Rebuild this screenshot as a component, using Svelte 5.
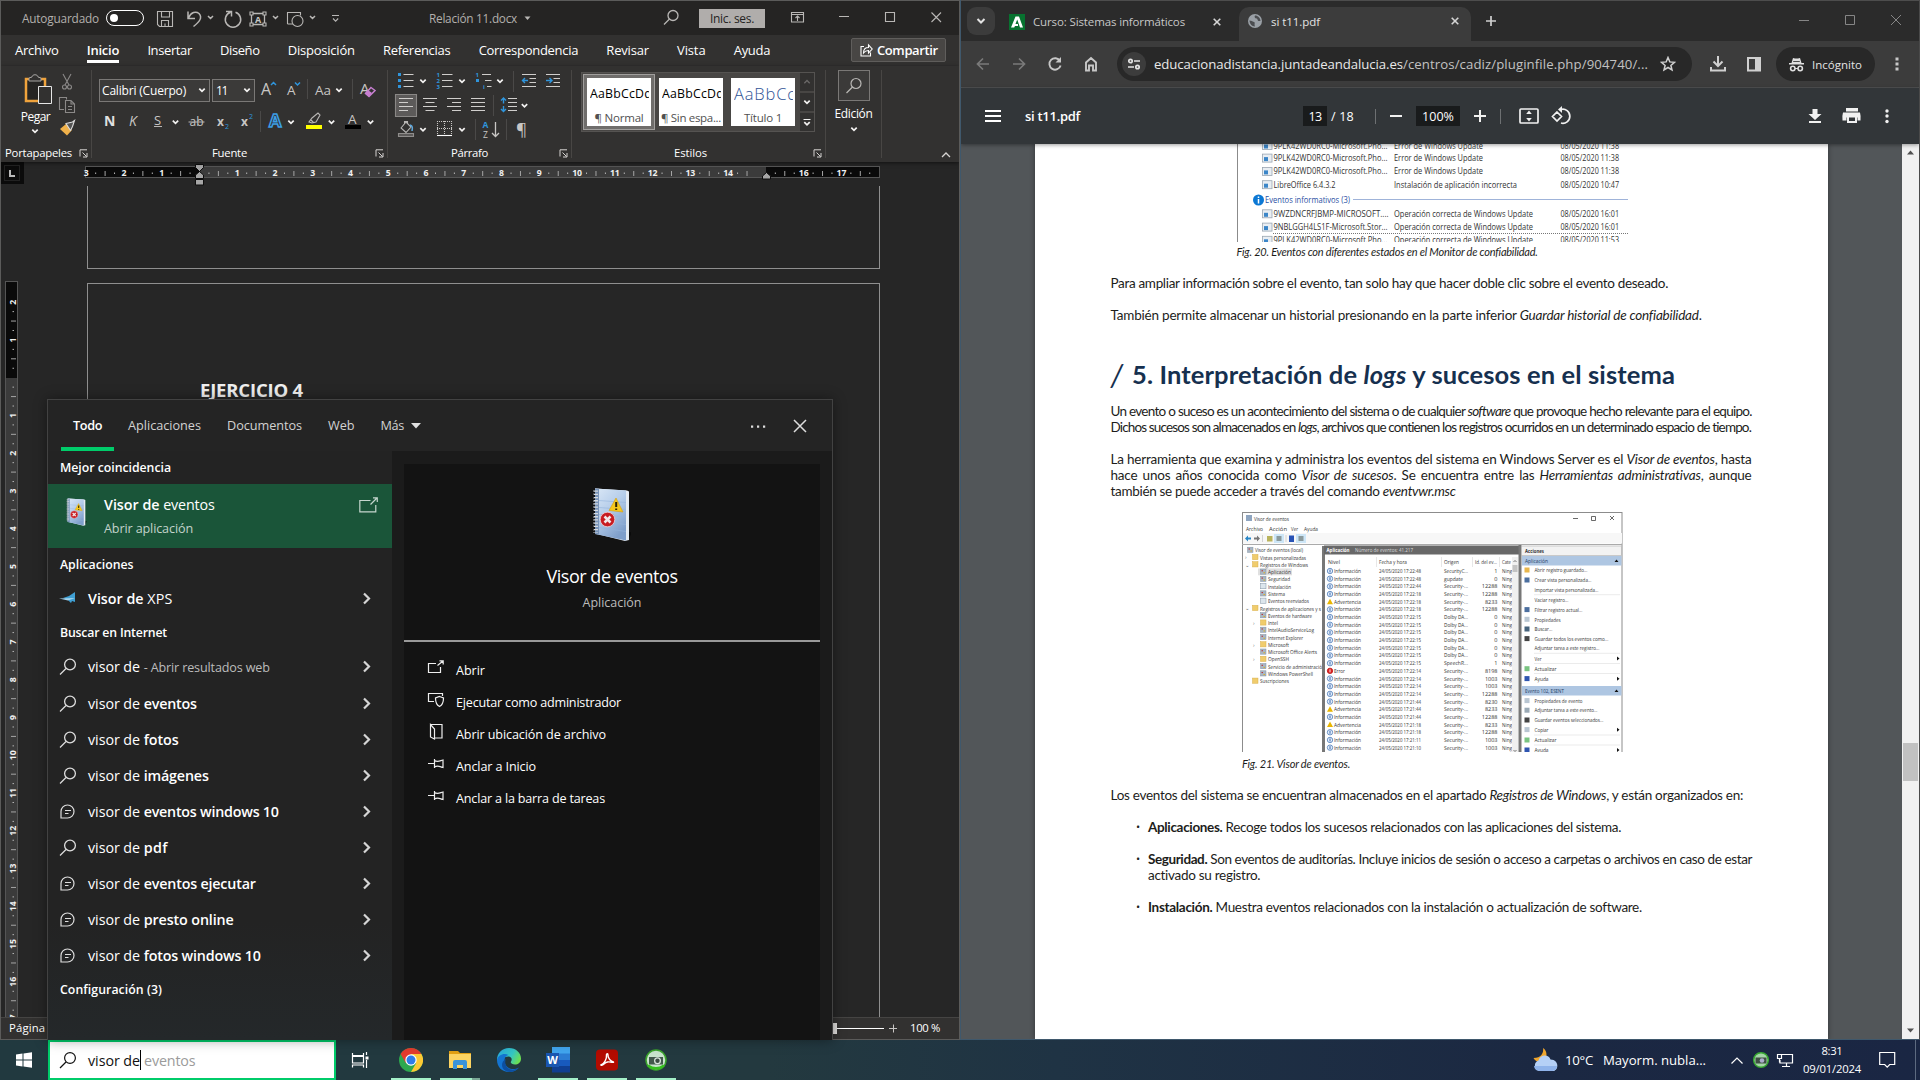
<script>
  // Spreads a run of text over its design width by adjusting tracking (or word gaps).
  function fit(node, arg) {
    const { w, by } = typeof arg === 'object' ? arg : { w: arg, by: 'letter' };
    if (!w) return;
    const now = node.getBoundingClientRect().width;
    const text = node.textContent.trim();
    if (by === 'word') {
      node.style.wordSpacing = (w - now) / (text.split(' ').length - 1) + 'px';
    } else {
      node.style.letterSpacing = (w - now) / text.length + 'px';
    }
  }

  const tabs = [['Archivo', 43.5], ['Inicio', 32.5], ['Insertar', 44.5], ['Diseño', 39.5], ['Disposición', 67], ['Referencias', 67.5], ['Correspondencia', 99.5], ['Revisar', 42.5], ['Vista', 28.5], ['Ayuda', 36.5]];

  const unit = 37.76;
  const hMarks = Array.from({ length: 21 }, (_, i) => i - 3);
  const vMarks = Array.from({ length: 20 }, (_, i) => i - 2);

  const filters = [['Todo', 29], ['Aplicaciones', 73], ['Documentos', 75], ['Web', 26.5], ['Más', 23.5]];
  const hits = [
    ['eventos', 53, 's'], ['fotos', 35, 's'], ['imágenes', 65, 's'], ['eventos windows 10', 135, 'c'], ['pdf', 24, 's'],
    ['eventos ejecutar', 112, 'c'], ['presto online', 90, 'c'], ['fotos windows 10', 117, 'c']
  ];
  const actions = [['open', 'Abrir', 29], ['shield', 'Ejecutar como administrador', 165], ['folder', 'Abrir ubicación de archivo', 150], ['pin', 'Anclar a Inicio', 80], ['pin', 'Anclar a la barra de tareas', 149]];

  const updates = [
    [145, '9PLK42WD0RC0-Microsoft.Pho...', 114, 'Error de Windows Update', 89, '08/05/2020 11:38'],
    [157.6, '9PLK42WD0RC0-Microsoft.Pho...', 114, 'Error de Windows Update', 89, '08/05/2020 11:38'],
    [170.9, '9PLK42WD0RC0-Microsoft.Pho...', 114, 'Error de Windows Update', 89, '08/05/2020 11:38'],
    [184.2, 'LibreOffice 6.4.3.2', 62, 'Instalación de aplicación incorrecta', 123, '08/05/2020 10:47'],
    [213.3, '9WZDNCRFJBMP-MICROSOFT....', 115, 'Operación correcta de Windows Update', 139, '08/05/2020 16:01'],
    [226.6, '9NBLGGH4LS1F-Microsoft.Stor...', 114, 'Operación correcta de Windows Update', 139, '08/05/2020 16:01'],
    [239.8, '9PLK42WD0RC0-Microsoft.Pho...', 114, 'Operación correcta de Windows Update', 139, '08/05/2020 11:53']
  ];

  const tree = [
    [1255, 'Visor de eventos (local)', 48, 'l', ''], [1260, 'Vistas personalizadas', 46, 'f', '›'], [1260, 'Registros de Windows', 48, 'f', '⌄'],
    [1268, 'Aplicación', 23, 'l', ''], [1268, 'Seguridad', 22, 'l', ''], [1268, 'Instalación', 23, 'p', ''], [1268, 'Sistema', 17, 'l', ''], [1268, 'Eventos reenviados', 41, 'p', ''],
    [1260, 'Registros de aplicaciones y s', 61, 'f', '⌄'], [1268, 'Eventos de hardware', 44, 'l', ''], [1268, 'Intel', 10, 'f', '›'], [1268, 'IntelAudioServiceLog', 46, 'l', ''],
    [1268, 'Internet Explorer', 35, 'l', ''], [1268, 'Microsoft', 21, 'f', '›'], [1268, 'Microsoft Office Alerts', 49, 'l', ''], [1268, 'OpenSSH', 21, 'f', '›'],
    [1268, 'Servicio de administració', 54, 'l', ''], [1268, 'Windows PowerShell', 45, 'l', ''], [1260, 'Suscripciones', 29, 'f', '']
  ];
  const events = [
    ['i', '22:48', 'SecurityC...', '1'], ['i', '22:48', 'gupdate', '0'], ['i', '22:44', 'Security-...', '12288'], ['i', '22:18', 'Security-...', '12288'],
    ['w', '22:18', 'Security-...', '8233'], ['i', '22:18', 'Security-...', '12288'], ['i', '22:15', 'Dolby DA...', '0'], ['i', '22:15', 'Dolby DA...', '0'],
    ['i', '22:15', 'Dolby DA...', '0'], ['i', '22:15', 'Dolby DA...', '0'], ['i', '22:15', 'Dolby DA...', '0'], ['i', '22:15', 'Dolby DA...', '0'],
    ['i', '22:15', 'SpeechR...', '1'], ['e', '22:14', 'Security-...', '8198'], ['i', '22:14', 'Security-...', '1003'], ['i', '22:14', 'Security-...', '1003'],
    ['i', '22:14', 'Security-...', '12288'], ['i', '21:44', 'Security-...', '8230'], ['w', '21:44', 'Security-...', '8233'], ['i', '21:44', 'Security-...', '12288'],
    ['w', '21:18', 'Security-...', '8233'], ['i', '21:18', 'Security-...', '12288'], ['i', '21:11', 'Security-...', '1003'], ['i', '21:10', 'Security-...', '1003']
  ];
  const kinds = { i: ['Información', 27], w: ['Advertencia', 27], e: ['Error', 11] };
  const side = [
    [570, 'Abrir registro guardado...', 53, '#e8b64c'], [580, 'Crear vista personalizada...', 57, '#4c6f9f'], [589.7, 'Importar vista personalizada...', 64, ''], [600, 'Vaciar registro...', 34, ''],
    [609.6, 'Filtrar registro actual...', 48, '#4c6f9f'], [619.3, 'Propiedades', 26, '#b9c6d2'], [629, 'Buscar...', 18, '#46637c'], [638.6, 'Guardar todos los eventos como...', 74, '#444'],
    [648, 'Adjuntar tarea a este registro...', 65, ''], [658.3, 'Ver', 7, ''], [668.7, 'Actualizar', 22, '#79c481'], [678.6, 'Ayuda', 14, '#2e55b0'],
    [700.6, 'Propiedades de evento', 48, '#b9c6d2'], [710.2, 'Adjuntar tarea a este evento...', 63, '#9aa9b5'], [720, 'Guardar eventos seleccionados...', 69, '#444'],
    [729.6, 'Copiar', 14, '#b9c6d2'], [740, 'Actualizar', 22, '#79c481'], [750, 'Ayuda', 14, '#2e55b0']
  ];
</script>

{#snippet t(s, w, cls = '')}<span class="t {cls}" use:fit={w}>{s}</span>{/snippet}

{#snippet v(x, y, s, w, cls = '')}<text {x} {y} textLength={w} lengthAdjust="spacingAndGlyphs" class="v {cls}">{s}</text>{/snippet}

{#snippet chev(x, y)}<path class="wl" stroke-width="1.7" d="M{x - 2.7} {y - 1.3}l2.7 2.7 2.7-2.7" />{/snippet}

{#snippet lens()}
  <svg class="ri" width="18" height="18" viewBox="0 0 18 18"><circle cx="11" cy="6.500" r="5.400" /><path d="M7 10.500l-6 6" /></svg>
{/snippet}

{#snippet arrow()}
  <svg class="go" width="10" height="14" viewBox="0 0 10 14"><path d="M2 1.500l5 5-5 5" /></svg>
{/snippet}

{#snippet openIcon(w)}
  <svg width={w} height={w * 0.84} viewBox="0 0 19 16" fill="none" stroke="currentColor" stroke-width="1.2"><path d="M11.5 3.5H.8v11.5h16V8" /><path d="M11.5 7.5L18 1M14 .8h4.3V5" /></svg>
{/snippet}

{#snippet launcher()}
  <svg class="launch" width="9" height="9" viewBox="0 0 9 9"><path d="M1 7.500V.8h7M3.500 3.500l4 4M8 4v4H4" /></svg>
{/snippet}

{#snippet notebook(w, h)}
  <svg width={w} height={h} viewBox="0 0 40 54">
    <defs>
      <linearGradient id="cover{w}" x1="0" y1="0" x2="0.6" y2="1"><stop offset="0" stop-color="#dbe8f6" /><stop offset="0.5" stop-color="#b5cdea" /><stop offset="1" stop-color="#7f9fcb" /></linearGradient>
    </defs>
    <path d="M36 44l5 1-4 8z" fill="#050505" opacity=".6" />
    <path d="M4 1L36 3 38 4V52.500L34 53.500 4 46z" fill="#e6ecf3" />
    <path d="M4 1L35 3V53L4 46.500z" fill="url(#cover{w})" />
    <path d="M4 1L8 1.300V47L4 46.500z" fill="#7994b9" />
    <path d="M8 13l27 2M8 20l27 2M8 27l27 2.500M8 34l27 3M8 40l27 4" stroke="#94b4dc" stroke-width=".6" />
    <path d="M4.500 3V45" stroke="#d5d9de" stroke-width="5" stroke-dasharray="1.300 1.900" />
    <path d="M2.500 3V45" stroke="#50555e" stroke-width="1" stroke-dasharray="1.300 1.900" />
    <path d="M25 10.500L32 24.500 18 23z" fill="#f6c81b" stroke="#d59c12" stroke-width=".6" />
    <path d="M25.200 14.500V19.500M25.200 21v1.600" stroke="#2b2204" stroke-width="2" />
    <circle cx="16.500" cy="32" r="7.300" fill="#c81c22" stroke="#eed3d6" stroke-width=".8" />
    <path d="M13.500 29l6 6M19.500 29l-6 6" stroke="#f1e8e9" stroke-width="2.500" />
  </svg>
{/snippet}

<div class="desktop">
  <section class="word">
    <header class="wtitle">
      {@render t('Autoguardado', 77, 'auto')}
      <span class="toggle"><i></i></span>
      <svg width="285" height="34" viewBox="144 1 285 34" class="wi">
        <path d="M157.500 11.500h15v15h-13l-2-2zM161.500 11.500v5.500h8v-5.500M161.500 26.500v-6h7v6M165 26v-2.500" />
        <path stroke-width="1.500" d="M188 11.500V18.500H195M188.500 18C191 12 196 11 199 13.500C203 18 199 22 193.500 26.500" />
        <path stroke-width="1.500" d="M226 11.500H231.500V16.500M230.500 12.200a7.700 7.700 0 1 0 5 0" />
        <path stroke-width="1.300" d="M251.500 13.500h13v11h-13z" /><path fill="#252423" d="M250 12h3v3h-3zM263 12h3v3h-3zM250 23h3v3h-3zM263 23h3v3h-3z" />
        <path d="M287.500 24V12.500h13v3M293 24h-5.500" /><circle cx="297.500" cy="21" r="5.500" />
        <path stroke-width="1.500" d="M208 16l2.500 2.500 2.500-2.500M273 16l2.500 2.500 2.500-2.500M310 16l2.500 2.500 2.500-2.500" />
        <path d="M332 15.500h7M333 18.500l2.600 2.600 2.600-2.600" />
        <text x="255" y="22.500" class="st ib">A</text>
      </svg>
      {@render t('Relación 11.docx', 88, 'docname')}
      <svg width="182" height="34" viewBox="517 1 182 34" class="wi">
        <path d="M524.500 16.500h6l-3 3.500z" fill="#b9b7b5" stroke="none" /><circle cx="673" cy="15.500" r="5" stroke-width="1.300" /><path stroke-width="1.300" d="M669.500 19L664 24.500" />
      </svg>
      <button class="signin">{@render t('Inic. ses.', 44)}</button>
      <svg width="193" height="34" viewBox="765 1 193 34" class="wi">
        <path d="M791.500 12.500h12v9.500h-12zM791.500 14.500h12M797.500 21v-5M795.500 18l2-2 2 2M839 16.500h10M885.500 12.500h9v9h-9zM931.500 12.500l9.500 9.500M941 12.500l-9.500 9.500" />
      </svg>
    </header>

    <nav class="wtabs">
      {#each tabs as [name, w]}
        <span class="wtab" class:on={name === 'Inicio'}>{@render t(name, w)}</span>
      {/each}
      <button class="share">
        <svg width="13" height="14" viewBox="0 0 13 14"><path d="M4 3.500H1V13h9.500V9.500M3.500 10c0-4 2-5.500 5-5.500V2l3.700 4-3.700 4V7.500C6.500 7.500 5 8 3.500 10z" /></svg>
        {@render t('Compartir', 61)}
      </button>
    </nav>

    <div class="ribbon">
      <div class="group clip">
        <div class="gbody">
          <div class="paste">
            <svg width="35" height="38" viewBox="20 70 35 38">
              <path d="M25 78h19v22H25z" fill="#252423" stroke="#f0a33c" stroke-width="2.500" /><path d="M28 80v-3l3-1c0-3 6-3 6 0l3 1v3z" fill="#323130" stroke="#a5a3a1" />
              <path d="M37.500 85.500h13v17h-13z" fill="#323130" stroke="#e6e6e6" />
            </svg>
            {@render t('Pegar', 29.5)}
            <svg width="10" height="8" viewBox="0 0 10 8">{@render chev(5, 4)}</svg>
          </div>
          <svg width="22" height="66" viewBox="56 70 22 66" class="wi">
            <path stroke="#8b8988" d="M63 73l6 11M71 73l-6 11" /><circle cx="64.500" cy="86" r="2" stroke="#8b8988" /><circle cx="69.500" cy="86" r="2" stroke="#8b8988" />
            <path stroke="#8b8988" d="M64 108.500h-4.500V96.500h7v2M65.500 99.500h5.500l3.500 3.500v8.500h-9zM71 99.500v3.500h3.500M68 105.500h4M68 108.500h4" />
            <path d="M60 128l6-5 6 6-5 5.500z" fill="#f0b14a" stroke="none" /><path d="M66 122.500l6.500-1.500 2-1.500-2 6-2 4z" stroke="#ddd" fill="#555" />
          </svg>
        </div>
        <footer>{@render t('Portapapeles', 67)}{@render launcher()}</footer>
      </div>

      <div class="group font">
        <div class="gbody col">
          <div class="frow">
            <span class="combo name">{@render t('Calibri (Cuerpo)', 84)}<svg width="8" height="6" viewBox="0 0 8 6">{@render chev(4, 3)}</svg></span>
            <span class="combo size">{@render t('11', 11)}<svg width="8" height="6" viewBox="0 0 8 6">{@render chev(4, 3)}</svg></span>
            <svg width="130" height="24" viewBox="255 77 130 24" class="wi">
              <text x="261" y="93.500" class="st a1">A</text><text x="287" y="93.500" class="st a2">A</text><text x="315" y="93.500" class="st a2">Aa</text><text x="360" y="92.500" class="st a3">A</text>
              <path stroke="#2f95dc" stroke-width="1.500" d="M271 84l2.500-2.500 2.500 2.500M295 81.500l2.500 2.500 2.500-2.500" />
              <path stroke="#4a4948" d="M307.500 78v20M352.500 78v20" />
              <path stroke="#c77fd0" stroke-width="1.500" d="M371 86.500l4 3-6 6-3.500-3z" /><path fill="#c77fd0" stroke="none" d="M368 89l4 3-3 3.500-4-3z" />
              {@render chev(339, 89)}
            </svg>
          </div>
          <svg width="288" height="24" viewBox="99 108 288 24" class="wi">
            <text x="104" y="124.500" class="st b1">N</text><text x="129" y="124.500" class="st b2">K</text><text x="154" y="123.500" class="st b3">S</text>
            <text x="189.500" y="125" class="st b4">ab</text><text x="217" y="124.500" class="st b5">x</text><text x="241" y="124.500" class="st b5">x</text>
            <text x="225" y="128" class="st b6">2</text><text x="249" y="117.500" class="st b6">2</text>
            <text x="269" y="126" class="st b7">A</text><text x="348" y="122.500" class="st a2">A</text>
            <path d="M154 125.500h8M188.500 121h16" />
            <path stroke="#4a4948" d="M260.500 110v21" />
            <path d="M312 117l6-5 2 2-4 7-4 1-3-1zM311 119l3 3" /><path d="M306 124h16v4h-16z" fill="#ff0" stroke="none" /><path d="M345 124h16v4h-16z" fill="#000" stroke="none" />
            {@render chev(175.5, 121)}{@render chev(291, 121)}{@render chev(331.5, 121)}{@render chev(370.5, 121)}
          </svg>
        </div>
        <footer>{@render t('Fuente', 35)}{@render launcher()}</footer>
      </div>

      <div class="group para">
        <svg width="183" height="76" viewBox="388 69 183 76" class="wi">
          <path fill="#2f95dc" stroke="none" d="M398 72h3v3h-3zM398 78h3v3h-3zM398 84h3v3h-3zM476 78h3v3h-3z" />
          <path stroke="#d0cecc" d="M403.500 73.500h10M403.500 79.500h10M403.500 85.500h10M442 73.500h10.500M442 79.500h10.500M442 85.500h10.500M482 73.500h9M485 79.500h6.500M487 85.500h4.500" />
          <text x="436.500" y="76" class="st n">1</text><text x="436.500" y="82" class="st n">2</text><text x="436.500" y="88" class="st n">3</text><text x="475.500" y="76" class="st n">1</text><text x="483" y="88" class="st n">i</text>
          <path stroke="#4a4948" d="M513.500 70v21M493.500 94v21M475.500 118v21M506.500 118v21" />
          <path stroke="#d0cecc" d="M522 73.500h14M529.500 77.500h6.500M529.500 81.500h6.500M522 85.500h14M546 73.500h14M553.500 77.500h6.500M553.500 81.500h6.500M546 85.500h14" />
          <path stroke="#2f95dc" stroke-width="1.400" d="M528 79.500h-5.500M525 77l-2.500 2.500 2.500 2.500M546 79.500h5.500M549.500 77l2.500 2.500-2.500 2.500" />
          <path fill="#5c5a59" stroke="#8a8886" d="M395.500 93.500h21v22h-21z" />
          <path stroke="#d0cecc" d="M399 97.500h14M399 101.500h9M399 105.500h14M399 109.500h9M423 97.500h14M425.500 101.500h9M423 105.500h14M425.500 109.500h9M447 97.500h14M452 101.500h9M447 105.500h14M452 109.500h9M471 97.500h14M471 101.500h14M471 105.500h14M471 109.500h14M508 97.500h9M508 101.500h9M508 105.500h9M508 109.500h9" />
          <path stroke="#2f95dc" stroke-width="1.400" d="M503.500 97v5.500M503.500 105v5.500M501 99.500l2.500-2.500 2.500 2.500M501 108l2.500 2.500 2.500-2.500" />
          <path d="M401 127l5-6 5 5-5 5.500zM404.500 123v-2.500h3v2" /><path stroke="#5fa8dd" stroke-width="1.500" d="M410 124c3 1 2.500 3 2 6" /><path stroke="#8f8d8b" fill="#5c5a59" d="M398.500 132.500h15v3h-15z" />
          <path stroke="#c8c6c4" stroke-dasharray="1 1" d="M437.500 120v15M451.500 120v15M444.500 120v15M437 120.500h15M437 127.500h15" /><path stroke="#fff" d="M437 134.500h15" />
          <text x="482.500" y="126.500" class="st az">A</text><text x="483" y="136.500" class="st zz">Z</text><path stroke="#c8c6c4" stroke-width="1.300" d="M495.500 121v14M492 132l3.500 3.500 3.500-3.500" />
          <text x="516" y="133.500" class="st pil">¶</text>
          {@render chev(423, 80)}{@render chev(462, 80)}{@render chev(500, 80)}{@render chev(524.5, 104.500)}{@render chev(423, 128.500)}{@render chev(462, 128.500)}
        </svg>
        <footer>{@render t('Párrafo', 37)}{@render launcher()}</footer>
      </div>

      <div class="group styles">
        <div class="gallery">
          <div class="card sel"><div class="paper"><div class="sample">{@render t('AaBbCcDd', 62)}</div>{@render t('¶ Normal', 49, 'sname')}</div></div>
          <div class="card"><div class="paper"><div class="sample">{@render t('AaBbCcDd', 62)}</div>{@render t('¶ Sin espa...', 60, 'sname')}</div></div>
          <div class="card"><div class="paper"><div class="sample big">{@render t('AaBbCc', 62)}</div>{@render t('Título 1', 38, 'sname')}</div></div>
          <div class="spin">
            <span><svg width="8" height="6" viewBox="0 0 8 6"><path d="M1.300 4.200L4 1.500l2.700 2.700" fill="none" stroke="#6b6968" stroke-width="1.300" /></svg></span>
            <span><svg width="8" height="6" viewBox="0 0 8 6">{@render chev(4, 3)}</svg></span>
            <span><svg width="8" height="10" viewBox="0 0 8 10"><path d="M.5 2.500h7" class="wl" />{@render chev(4, 6.500)}</svg></span>
          </div>
        </div>
        <footer>{@render t('Estilos', 33)}{@render launcher()}</footer>
      </div>

      <div class="group edit">
        <span class="find"><svg width="18" height="18" viewBox="0 0 18 18" class="wi"><circle cx="11" cy="6.500" r="5" stroke-width="1.200" /><path stroke-width="1.200" d="M7.500 10L1.500 16" /></svg></span>
        {@render t('Edición', 38)}
        <svg width="10" height="8" viewBox="0 0 10 8">{@render chev(5, 4)}</svg>
      </div>
      <svg class="collapse" width="10" height="8" viewBox="0 0 10 8"><path d="M1 6l4-4 4 4" fill="none" stroke="#d6d4d2" stroke-width="1.300" /></svg>
    </div>

    <svg class="hruler" width="958" height="24" viewBox="1 162 958 24">
      <rect x="0" y="162" width="24" height="22" fill="#0b0b0b" /><rect x="4.500" y="165.500" width="15" height="15" fill="none" stroke="#222" />
      <path d="M10 170v6h5" fill="none" stroke="#b9b9b9" stroke-width="2" />
      <rect x="85.500" y="166.500" width="794" height="11" fill="#3b3b3b" stroke="#555" />
      <rect x="86" y="167" width="114" height="10" fill="#0a0a0a" /><rect x="766" y="167" width="113" height="10" fill="#0a0a0a" />
      {#each hMarks as n}
        {#if n !== 0 && n !== 15 && n < 18}<text x={199.5 + n * unit} y="176" class="rn">{Math.abs(n)}</text>{/if}
        <path d="M{199.5 + (n + 0.5) * unit} 171v5" stroke="#a5a5a5" />
        {#if n !== 14}<path d="M{199.5 + (n + 0.75) * unit} 172.500v1.500" stroke="#b5b5b5" />{/if}
        <path d="M{199.5 + (n + 0.25) * unit} 172.500v1.500" stroke="#b5b5b5" />
      {/each}
      <path d="M880 162h80v24h-80z" fill="#262626" />
      <path d="M195.500 164.500h8v3l-4 4 4 3.500v3.500h-8v-3.500l4-3.500-4-4zM195.500 179.500h8v5.500h-8z" fill="#a6a6a6" stroke="#0d0d0d" />
      <path d="M766.500 172.500l4 3.500v3h-8v-3z" fill="#a6a6a6" stroke="#0d0d0d" />
    </svg>

    <div class="doc">
      <svg class="vruler" width="20" height="831" viewBox="1 186 20 831">
        <rect x="5.500" y="281.500" width="12" height="760" fill="#3b3b3b" stroke="#555" /><rect x="6" y="282" width="11" height="96" fill="#0a0a0a" />
        {#each vMarks as n}
          {#if n !== 0}<text transform="translate(16 {377.7 + n * unit}) rotate(-90)" class="rn">{Math.abs(n)}</text>{/if}
          <path d="M11 {377.7 + (n + 0.5) * unit}h5" stroke="#a5a5a5" />
          <path d="M12.500 {377.7 + (n + 0.75) * unit}h1.500M12.500 {377.7 + (n + 0.25) * unit}h1.500" stroke="#b5b5b5" />
        {/each}
      </svg>
      <div class="pages">
        <div class="sheet first"></div>
        <div class="sheet second">{@render t('EJERCICIO 4', 103, 'exercise')}</div>
      </div>
    </div>

    <footer class="wstatus">
      {@render t('Página 4', 46)}
      <div class="zoom">
        <svg width="70" height="16" viewBox="832 1020 70 16"><path d="M832 1028.500h52" stroke="#fff" /><path d="M832 1023h5v11h-5z" fill="#e1dfdd" /><path d="M889 1028.500h8M893.500 1024.500v8" stroke="#c8c6c4" /></svg>
        {@render t('100 %', 30)}
      </div>
    </footer>
  </section>

  <section class="chrome">
    <header class="strip">
      <button class="tabsearch"><svg width="10" height="8" viewBox="0 0 10 8"><path d="M1.500 2L5 5.500 8.500 2" fill="none" stroke="#e3e3e3" stroke-width="2" /></svg></button>
      <div class="tab idle">
        <svg width="16" height="16" viewBox="0 0 16 16"><path d="M0 0h16v16H0z" fill="#07722f" /><path d="M2 13.500L6.500 2.500h3.500L14 13.500h-3L8.200 5.500 6.500 10H9v2H6l-.8 1.500z" fill="#fff" /></svg>
        {@render t('Curso: Sistemas informáticos', 152)}
        <svg class="x" width="8" height="8" viewBox="0 0 8 8"><path d="M.7.7l6.600 6.600M7.300.7L.7 7.300" /></svg>
      </div>
      <div class="tab live">
        <svg width="14" height="14" viewBox="0 0 14 14"><circle cx="7" cy="7" r="7" fill="#9aa0a6" /><path d="M1.500 6.500c2 0 2.500 1 4.500 1.500 1.500.5 0 2 1 4.500-3 0-5.500-3-5.500-6zM7 1.500c-1 1.500 0 3 1.500 3S9 7 11 7l1.500 0C12.500 4 10 1.500 7 1.500z" fill="#4b4d50" /></svg>
        {@render t('si t11.pdf', 49)}
        <svg class="x" width="8" height="8" viewBox="0 0 8 8"><path d="M.7.7l6.600 6.600M7.300.7L.7 7.300" /></svg>
      </div>
      <svg class="plus" width="10" height="10" viewBox="0 0 10 10"><path d="M5 0v10M0 5h10" stroke="#d0d0d0" stroke-width="1.700" /></svg>
      <svg class="caps" width="104" height="12" viewBox="1798 14 104 12"><path d="M1799 20.500h10M1845.500 15.500h9v9h-9zM1891 15l10 10M1901 15l-10 10" fill="none" stroke="#868686" /></svg>
    </header>

    <div class="bar">
      <svg width="156" height="46" viewBox="961 41 156 46" fill="none" stroke="#c7c7c7" stroke-width="1.900">
        <path stroke="#7a7a7a" stroke-width="1.700" d="M989 64h-11M983 58.500L977.500 64l5.500 5.500M1013 64h11M1019 58.500l5.500 5.500-5.500 5.500" />
        <path d="M1060 61a5.700 5.700 0 1 0 .6 4.500" /><path d="M1061 57v5.500h-5.500z" fill="#c7c7c7" stroke="none" />
        <path d="M1086 62.500l5-4.500 5 4.500v8h-3v-5h-4v5h-3z" />
      </svg>
      <div class="omni">
        <span class="site"><svg width="14" height="12" viewBox="0 0 14 12" fill="none" stroke="#e3e3e3" stroke-width="1.700"><circle cx="3.500" cy="3" r="1.700" /><path d="M7 3h6M1 9h6" /><circle cx="10.500" cy="9" r="1.700" /></svg></span>
        {@render t('educacionadistancia.juntadeandalucia.es', 249, 'host')}{@render t('/centros/cadiz/pluginfile.php/904740/...', 245, 'path')}
        <svg class="star" width="16" height="16" viewBox="0 0 16 16"><path d="M8 1.500l1.800 4.400 4.700.4-3.600 3.100 1.100 4.600L8 11.500 4 14l1.100-4.600L1.500 6.300l4.700-.4z" fill="none" stroke="#d0d0d0" stroke-width="1.500" /></svg>
      </div>
      <svg width="84" height="46" viewBox="1692 41 84 46" fill="none" stroke="#d0d0d0" stroke-width="2">
        <path d="M1718 56v9M1713.500 61.500l4.500 4.500 4.500-4.500M1711 67v3.500h14V67" /><path d="M1748 58h12v12.500h-12z" /><path d="M1755 57h6v14h-6z" fill="#d0d0d0" stroke="none" />
      </svg>
      <span class="incog">
        <svg width="15" height="15" viewBox="0 0 15 15" fill="#e0e0e0"><path d="M4 1l2 .5L9 1.500 11 1l1.500 5H15v1.500H0V6h2.500z" /><path d="M4.200 4.500h6.600" stroke="#282828" stroke-width=".8" /><circle cx="3.800" cy="11.500" r="2.200" fill="none" stroke="#e0e0e0" stroke-width="1.600" /><circle cx="11.200" cy="11.500" r="2.200" fill="none" stroke="#e0e0e0" stroke-width="1.600" /><path d="M6 11h3v1H6z" /></svg>
        {@render t('Incógnito', 50)}
      </span>
      <svg class="more" width="4" height="16" viewBox="0 0 4 16" fill="#c7c7c7"><path d="M.5 1.500h3v3h-3zM.5 6.500h3v3h-3zM.5 11.500h3v3h-3z" /></svg>
    </div>

    <div class="pdfbar">
      <svg class="burger" width="16" height="12" viewBox="0 0 16 12"><path d="M0 1h16M0 6h16M0 11h16" stroke="#fff" stroke-width="2" /></svg>
      {@render t('si t11.pdf', 55, 'fname')}
      <div class="pager"><b>{@render t('13', 13)}</b>{@render t('/ 18', 23)}</div>
      <svg width="41" height="24" viewBox="1375 104 41 24"><path d="M1375.500 109v15" stroke="#6d7072" /><path d="M1390 116h12" stroke="#f1f1f1" stroke-width="2" /></svg>
      <b class="pct">{@render t('100%', 32)}</b>
      <svg width="120" height="24" viewBox="1460 104 120 24" fill="none" stroke="#f1f1f1" stroke-width="2">
        <path d="M1480 110v12M1474 116h12" /><path stroke="#6d7072" stroke-width="1" d="M1500.500 109v15" />
        <rect x="1520" y="109" width="18" height="14" rx="1" stroke-width="1.700" /><path d="M1529 110.500l2.800 3.500h-5.600zM1529 121.500l2.800-3.500h-5.600z" fill="#f1f1f1" stroke="none" />
        <path stroke-width="1.700" d="M1557 112l4.500 4.500-4.500 4.500-4.500-4.500zM1561 109.500a7 7 0 1 1 0 13.500" /><path d="M1562 106v7l-4-3.500z" fill="#f1f1f1" stroke="none" />
      </svg>
      <svg class="right" width="84" height="24" viewBox="1808 104 84 24" fill="#f1f1f1">
        <path d="M1812.500 109h5v5h4l-6.500 6-6.500-6h4zM1809 121h12v2h-12zM1846 108h12v3.500h-12zM1843 112.500h17q1 3.500.5 8h-3v-3h-11v3h-4q-.5-5 .5-8zM1847 117.500h10v5.500h-10z" /><path d="M1849 117.500h6v3.500h-6z" fill="#323639" />
        <circle cx="1887" cy="111" r="1.700" /><circle cx="1887" cy="116" r="1.700" /><circle cx="1887" cy="121.500" r="1.700" />
      </svg>
    </div>

    <div class="viewer">
      <article class="page">
        <svg class="fig20" width="392" height="98" viewBox="1237 144 392 98">
          <path d="M1237.500 144v98" stroke="#8b8b8b" />
          {#each updates as [y, a, aw, b, bw, c]}
            <rect x="1262.500" y={y - 3.500} width="9.500" height="8" fill="#e9eef3" stroke="#9aa6b2" stroke-width=".8" /><rect x="1264" y={y - 0.500} width="4" height="4" fill="#3c86c8" />
            <text x="1273.500" y={y + 3.500} textLength={aw} lengthAdjust="spacingAndGlyphs" class="u">{a}</text>
            <text x="1394" y={y + 3.500} textLength={bw} lengthAdjust="spacingAndGlyphs" class="u">{b}</text>
            <text x="1560.500" y={y + 3.500} textLength="58.500" lengthAdjust="spacingAndGlyphs" class="u">{c}</text>
          {/each}
          <circle cx="1258.500" cy="200" r="5.500" fill="#0c78d4" /><path d="M1258.500 196.500v1.500M1258.500 199v4.500" stroke="#fff" stroke-width="1.500" />
          <text x="1265" y="203" textLength="85" lengthAdjust="spacingAndGlyphs" class="u blue">Eventos informativos (3)</text><path d="M1353 199.500h275" stroke="#9fb3d9" />
          <path d="M1273 233.500h355" stroke="#777" stroke-dasharray="1 1" />
        </svg>
        <div class="cap c20"><em class="t" use:fit={301}>Fig. 20. Eventos con diferentes estados en el Monitor de confiabilidad.</em></div>
        <p class="m15"><span class="t" use:fit={557.5}>Para ampliar información sobre el evento, tan solo hay que hacer doble clic sobre el evento deseado.</span></p>
        <p class="m16"><span class="t" use:fit={591}>También permite almacenar un historial presionando en la parte inferior <em>Guardar historial de confiabilidad</em>.</span></p>
        <h1><i class="slash">/</i><span class="t" use:fit={543}>5. Interpretación de <em>logs</em> y sucesos en el sistema</span></h1>
        <p><span class="t" use:fit={641}>Un evento o suceso es un acontecimiento del sistema o de cualquier <em>software</em> que provoque hecho relevante para el equipo.</span></p>
        <p><span class="t" use:fit={641}>Dichos sucesos son almacenados en <em>logs</em>, archivos que contienen los registros ocurridos en un determinado espacio de tiempo.</span></p>
        <p class="m16"><span class="t snug" use:fit={{ w: 641, by: 'word' }}>La herramienta que examina y administra los eventos del sistema en Windows Server es el <em>Visor de eventos</em>, hasta</span></p>
        <p><span class="t snug" use:fit={{ w: 641, by: 'word' }}>hace unos años conocida como <em>Visor de sucesos</em>. Se encuentra entre las <em>Herramientas administrativas</em>, aunque</span></p>
        <p><span class="t" use:fit={345}>también se puede acceder a través del comando <em>eventvwr.msc</em></span></p>

        <svg class="fig21" width="381" height="240" viewBox="1242 512 381 240">
          <rect x="1242.500" y="512.500" width="379.500" height="250" fill="#fff" stroke="#8c8c8c" />
          <rect x="1246" y="515" width="6" height="6" fill="#8fa5c0" />{@render v(1254, 520.5, 'Visor de eventos', 35)}
          <path d="M1573 518.500h5M1591.500 516.500h4v4h-4zM1610 516l4 4M1614 516l-4 4" fill="none" stroke="#444" stroke-width=".8" />
          {@render v(1246, 531, 'Archivo', 17)}{@render v(1269, 531, 'Acción', 18)}{@render v(1291, 531, 'Ver', 7)}{@render v(1304, 531, 'Ayuda', 14)}
          <rect x="1243" y="533" width="379" height="10.500" fill="#f7f7f7" /><rect x="1274" y="534" width="10" height="9" fill="#cde6f7" /><rect x="1296" y="534" width="10" height="9" fill="#cde6f7" />
          <path d="M1245 538.500l3-3v2h3v2h-3v2z" fill="#2786c7" /><path d="M1260 538.500l-3-3v2h-3v2h3v2z" fill="#777" />
          <rect x="1267" y="536" width="5.500" height="5.500" fill="#b9b35c" /><rect x="1276.500" y="536" width="5" height="5" fill="#8b9a9c" /><rect x="1289" y="535.500" width="5" height="6.500" fill="#2953b5" /><rect x="1298.500" y="536" width="5" height="5" fill="#8b9a9c" />
          <path d="M1262.500 535v7M1286 535v7" stroke="#bbb" stroke-width=".6" /><path d="M1242 544.500h380" stroke="#aaa" />
          <rect x="1258" y="568.500" width="34" height="6.800" fill="#e0e0e0" />
          {#each tree as [x, s, w, k, tw], i}
            <rect x={x - 7.500} y={547.200 + i * 7.270} width="5.500" height="5.200" fill={k === 'f' ? '#f0cc6c' : k === 'p' ? '#dce5ec' : '#a9b6c4'} stroke={k === 'f' ? '#d9b04a' : '#8394a5'} stroke-width=".5" />
            {#if k === 'l'}<path d="M{x - 6.5} {549 + i * 7.27}h1.500" stroke="#b33" /><path d="M{x - 4.5} {551 + i * 7.27}h1.500" stroke="#e0b020" />{/if}
            {#if tw}<text x={x - 15} y={552 + i * 7.27} class="v g">{tw}</text>{/if}
            {@render v(x, 552.4 + i * 7.27, s, w)}
          {/each}
          <rect x="1322" y="546" width="3" height="206" fill="#777" /><rect x="1324" y="545.500" width="195" height="9" fill="#686868" />
          {@render v(1326.5, 552.3, 'Aplicación', 23, 'hd')}{@render v(1355, 552.3, 'Número de eventos: 41.217', 58, 'lt')}
          {@render v(1328, 564, 'Nivel', 12)}{@render v(1379, 564, 'Fecha y hora', 28)}{@render v(1444, 564, 'Origen', 15)}{@render v(1475, 564, 'Id. del ev...', 22)}{@render v(1502, 564, 'Cate', 9)}
          <path d="M1376.500 557v10M1441.500 557v10M1472.500 557v10M1499.500 557v10" stroke="#ddd" stroke-width=".7" />
          {#each events as [k, time, src, id], i}
            {@const y = 573 + i * 7.680}
            {#if k === 'w'}<path d="M1330 {y - 5}l3 5.500h-6z" fill="#e9b500" />{:else}<circle cx="1330" cy={y - 2} r="2.700" fill={k === 'i' ? '#e4eefb' : '#d22'} stroke={k === 'i' ? '#4d7bb8' : '#b11'} stroke-width=".8" /><path d="M1330 {y - 3.500}v3" stroke={k === 'i' ? '#2457a5' : '#fff'} stroke-width=".9" />{/if}
            {@render v(1334, y, kinds[k][0], kinds[k][1])}
            {@render v(1379, y, '24/05/2020 17:' + time, 42)}
            {@render v(1444, y, src, src === 'gupdate' ? 19 : 24)}
            <text x="1497.500" {y} class="v end">{id}</text>{@render v(1502, y, 'Ning', 10)}
          {/each}
          <rect x="1512" y="557" width="6" height="195" fill="#f0f0f0" /><rect x="1512.500" y="565" width="5" height="7" fill="#c4c4c4" />
          <path d="M1513.500 562l1.500-1.500 1.500 1.500M1513.500 750l1.500 1.500 1.500-1.500" fill="none" stroke="#444" stroke-width=".7" />
          <rect x="1518.500" y="545" width="3" height="207" fill="#777" />
          <rect x="1521.500" y="546" width="100" height="9.500" fill="#f2f2f2" stroke="#aaa" stroke-width=".6" />{@render v(1525, 552.8, 'Acciones', 19, 'dk')}
          <rect x="1522" y="556" width="99.500" height="9.500" fill="#aec6e2" />{@render v(1525, 562.8, 'Aplicación', 23, 'nv')}
          <rect x="1522" y="686" width="99.500" height="9.500" fill="#aec6e2" />{@render v(1525, 692.8, 'Evento 102, ESENT', 39, 'nv')}
          <path d="M1614.500 562l2-2.500 2 2.500zM1614.500 692l2-2.500 2 2.500zM1617 656.500v4l2.500-2zM1617 676.800v4l2.500-2zM1617 727.800v4l2.500-2zM1617 748v4l2.500-2z" fill="#111" />
          {#each side as [y, s, w, c]}
            {#if c}<rect x="1524.500" y={y - 2.500} width="5" height="5" fill={c} />{/if}
            {@render v(1534.5, y + 2.2, s, w)}
          {/each}
          <path d="M1534 594.700h86M1534 653.300h86M1534 663.500h86M1534 673.500h86M1534 735h86M1534 745h86" stroke="#ddd" stroke-width=".6" />
        </svg>
        <div class="cap c21"><em class="t" use:fit={108}>Fig. 21. Visor de eventos.</em></div>
        <p class="m15"><span class="t" use:fit={632.5}>Los eventos del sistema se encuentran almacenados en el apartado <em>Registros de Windows</em>, y están organizados en:</span></p>
        <ul>
          <li><span class="t" use:fit={473}><b>Aplicaciones.</b> Recoge todos los sucesos relacionados con las aplicaciones del sistema.</span></li>
          <li><span class="t" use:fit={604}><b>Seguridad.</b> Son eventos de auditorías. Incluye inicios de sesión o acceso a carpetas o archivos en caso de estar</span><br /><span class="t" use:fit={112.5}>activado su registro.</span></li>
          <li><span class="t" use:fit={493.500}><b>Instalación.</b> Muestra eventos relacionados con la instalación o actualización de software.</span></li>
        </ul>
      </article>
      <div class="scroll">
        <svg width="17" height="17" viewBox="0 0 17 17"><path d="M5 10.500h7L8.500 6.500z" fill="#505050" /></svg>
        <i class="thumb"></i>
        <svg width="17" height="17" viewBox="0 0 17 17"><path d="M5 6.500h7l-3.500 4z" fill="#505050" /></svg>
      </div>
    </div>
  </section>

  <aside class="search">
    <header>
      {#each filters as [name, w]}
        <span class="filter" class:on={name === 'Todo'}>{@render t(name, w)}</span>
      {/each}
      <svg width="10" height="6" viewBox="0 0 10 6"><path d="M0 0h10L5 5.500z" fill="#e0e0e0" /></svg>
      <svg class="shead" width="56" height="16" viewBox="751 417 56 16"><path d="M751 424.500h2.200v2.200h-2.200zM757 424.500h2.200v2.200h-2.200zM763 424.500h2.200v2.200h-2.200z" fill="#ddd" /><path d="M794 419l12 12M806 419l-12 12" stroke="#ddd" stroke-width="1.500" /></svg>
    </header>
    <div class="cols">
      <div class="results">
        <h3 class="h33">{@render t('Mejor coincidencia', 111)}</h3>
        <div class="best">
          <span class="bicon">{@render notebook(22, 28)}</span>
          <div class="btext"><span class="bt"><b>{@render t('Visor de', 55.5)}</b> {@render t('eventos', 51.5)}</span>{@render t('Abrir aplicación', 89, 'sub')}</div>
          <span class="bopen">{@render openIcon(19)}</span>
        </div>
        <h3 class="h33">{@render t('Aplicaciones', 73.5)}</h3>
        <div class="row"><svg class="ri" width="18" height="14" viewBox="0 0 18 14"><path d="M4 6l6-2 6-4v10l-3-1-1 2-3-3z" fill="#3f9fd3" stroke="none" /><path d="M0 6.500l16-.5-7 2.500z" fill="#a5d5ef" stroke="none" /></svg><span><b>{@render t('Visor de', 55.5)}</b> {@render t('XPS', 25.5)}</span>{@render arrow()}</div>
        <h3 class="h32">{@render t('Buscar en Internet', 107)}</h3>
        <div class="row tall">{@render lens()}<span>{@render t('visor de', 52)} {@render t('- Abrir resultados web', 126, 'sub')}</span>{@render arrow()}</div>
        {#each hits as [s, w, k]}
          <div class="row">
            {#if k === 's'}{@render lens()}{:else}<svg class="ri" width="18" height="18" viewBox="0 0 18 18"><path d="M2 15V8.500A6.500 6.500 0 1 1 8.500 15zM6 7.500h6M6 10.500h3.500" stroke-width="1.200" /></svg>{/if}
            <span>{@render t('visor de', 52)} <b>{@render t(s, w)}</b></span>{@render arrow()}
          </div>
        {/each}
        <h3 class="h32">{@render t('Configuración (3)', 102)}</h3>
      </div>
      <div class="preview">
        <div class="hero">
          {@render notebook(40, 55)}
          {@render t('Visor de eventos', 131, 'ht')}
          {@render t('Aplicación', 59, 'hs')}
        </div>
        <div class="acts">
          {#each actions as [k, s, w]}
            <div class="act">
              <svg width="18" height="18" viewBox="0 0 18 18">
                {#if k === 'open'}<path d="M9 4.500H1.500v9h12V8M10.500 6.500L16 2M12.500 1.800h3.700v3.700" />
                {:else if k === 'shield'}<path d="M7 10.500H1.500v-8h14v2.500M12.500 5.500l4 1.500c0 5-1 7-4 8.500-3-1.500-4-3.500-4-8.500z" />
                {:else if k === 'folder'}<path d="M4 1.500h11v13.500h-7M3.500 1.500v12.500l4 2V6z" />
                {:else}<path d="M1 8.500h6M7.500 4v9M7.500 5.500c3 2 5 .5 8.500-.5v7.500c-3.500-1-5.500-2.500-8.500-.500" />{/if}
              </svg>
              {@render t(s, w)}
            </div>
          {/each}
        </div>
      </div>
    </div>
  </aside>

  <footer class="taskbar">
    <svg width="48" height="40" viewBox="0 1040 48 40" fill="#fff"><path d="M16 1054.500l6.500-1v6H16zM23.500 1053.400l8.500-1.200v7.300h-8.500zM16 1060.500h6.500v6l-6.500-1zM23.500 1060.500H32v7.300l-8.500-1.200z" /></svg>
    <div class="sbox">
      <svg width="18" height="18" viewBox="0 0 18 18" fill="none" stroke="#111" stroke-width="1.200"><circle cx="11" cy="7" r="5.400" /><path d="M7 11l-6 6" /></svg>
      {@render t('visor de', 52)}<i class="caret"></i>{@render t('eventos', 51.500, 'hint')}
    </div>
    <svg width="50" height="40" viewBox="336 1040 50 40" fill="none" stroke="#fff" stroke-width="1.200"><path d="M352.500 1053v2.500h11V1053M352.500 1067.500V1065h11v2.500M352.500 1056.500h11v6.500h-11zM366.500 1052v3M366.500 1060v8" /><path d="M365.500 1056.500h3v3h-3z" fill="#fff" stroke="none" /></svg>
    <div class="apps">
      <span class="app run">
        <svg width="24" height="24" viewBox="0 0 24 24"><circle cx="12" cy="12" r="12" fill="#2da84f" /><path d="M1.600 6A12 12 0 0 1 22.400 6H12L6.800 15z" fill="#e33b2e" /><path d="M22.400 6A12 12 0 0 1 12 24L17.200 15 12 6z" fill="#fcc934" /><circle cx="12" cy="12" r="5.700" fill="#fff" /><circle cx="12" cy="12" r="4.500" fill="#2f7ce9" /></svg>
      </span>
      <span class="app run split">
        <svg width="22" height="20" viewBox="0 0 22 20"><path d="M0 1h9l2 2h11v6H0z" fill="#e2a114" /><path d="M0 4h22v14H0z" fill="#fcd462" /><path d="M4 19v-7q0-2 2-2h10q2 0 2 2v7h-4v-4H8v4z" fill="#3a93da" /></svg>
      </span>
      <span class="app">
        <svg width="24" height="24" viewBox="0 0 24 24"><defs><linearGradient id="eg" x1="0" x2="1" y1="0.200" y2="0.600"><stop offset="0" stop-color="#27a8dc" /><stop offset=".6" stop-color="#35c6c4" /><stop offset="1" stop-color="#6de04f" /></linearGradient></defs><path d="M0 12C0 5 5 0 12 0s12 5 12 10.500c0 4-3 6-6 6s-5-1.500-4-3c1.500-2 .5-5-2.500-5C6 8.500 0 14 0 12z" fill="url(#eg)" /><path d="M0 12c1-5 7-7.500 11.500-5C7 8 6.500 14 9 17.500s8 5 13 2C19 23 16 24 12 24 5 24 0 19 0 12z" fill="#1474d0" /><path d="M9 11c-2 4 0 9 5 10.500 3 .5 6-.5 8-2-5 6-13 5.500-16 1-2-3.500-1-7.500 3-9.500z" fill="#0d4fa0" /></svg>
      </span>
      <span class="app run">
        <svg width="24" height="26" viewBox="0 -2 24 26"><path d="M6 -2h18v7H6z" fill="#41a5ee" /><path d="M6 4.500h18V11H6z" fill="#2b7cd3" /><path d="M6 11h18v6.500H6z" fill="#185abd" /><path d="M6 17h18v6.500H6z" fill="#103f91" /><path d="M0 4h13v14H0z" fill="#1a56b0" /><text x="1.300" y="15" class="st w">W</text></svg>
      </span>
      <span class="app run">
        <svg width="22" height="22" viewBox="0 0 22 22"><rect width="22" height="21" y=".5" rx="4" fill="#b30b00" /><path d="M5 16c3-1 6-6 5.500-10.500C10.500 4.500 12 4.500 12 6c-.5 3 3 6.500 5.500 7 .5 1-3-.5-6 0S6 17.500 5 16z" fill="none" stroke="#fff" stroke-width="1.400" /></svg>
      </span>
      <span class="app run">
        <svg width="22" height="22" viewBox="0 0 22 22"><circle cx="11" cy="11" r="10" fill="#c8e3cc" stroke="#3aa32c" stroke-width="1.500" /><path d="M4 8h14v7.500H4z" fill="#43584c" /><path d="M3 16.500q8 5.500 16 0" stroke="#36c01f" stroke-width="2.500" fill="none" /><circle cx="12.500" cy="11.800" r="3.500" fill="#dbe6de" /><circle cx="12.500" cy="11.800" r="2.200" fill="#3c4c44" /></svg>
      </span>
    </div>
    <div class="tray">
      <svg width="26" height="24" viewBox="0 0 26 24"><path d="M10 0c1 5-2 10-9.500 10 3 6 13 5 13-3C13.500 4 12.500 1.500 10 0z" fill="#f0a62d" /><path d="M6 23a5.500 5.500 0 0 1-.5-10.500C7 6 16 6 17.500 11.500c9 0 8.500 11.500 2 11.500z" fill="#b5d0f6" /><path d="M3 22q-2-2-2-4h23q0 4-4.500 5H6z" fill="#8fb3ea" /></svg>
      {@render t('10°C', 28)}{@render t('Mayorm. nubla...', 103, 'wx')}
      <svg class="icons" width="66" height="18" viewBox="1730 1051 66 18" fill="none" stroke="#fff" stroke-width="1.200">
        <path d="M1731.500 1063.500l5.500-5.500 5.500 5.500" /><circle cx="1761" cy="1060" r="7.300" fill="#a5d4a8" stroke="#38a832" stroke-width="1.500" /><path d="M1755.500 1057.500h11v6h-11z" fill="#3f4f44" stroke="none" /><circle cx="1762" cy="1060.500" r="2.300" fill="#aac" stroke="none" />
        <path d="M1782 1054.500h10.500v8.500H1780v-3M1777.500 1054.500h4v4h-4zM1779.500 1058.500v4M1786.500 1063v3.500M1782 1066.500h8" />
      </svg>
      <div class="clock">{@render t('8:31', 21)}{@render t('09/01/2024', 58)}</div>
      <svg class="note" width="17" height="18" viewBox="0 0 17 18" fill="none" stroke="#fff" stroke-width="1.200"><path d="M.7 1.500h15v12h-5l-2.500 2.700-2.500-2.700h-5z" /></svg>
      <i class="peek"></i>
    </div>
  </footer>
</div>

<style>
  :global(body) { margin: 0; background: #252525; overflow: hidden; }
  .desktop { position: relative; display: grid; grid-template: 1040px 40px / 960px 960px; width: 1920px; height: 1080px; font-family: 'Open Sans', 'Noto Sans', sans-serif; font-size: 11.300px; color: #fff; overflow: hidden; }
  .desktop * { box-sizing: border-box; }
  svg { display: block; flex: none; }
  button { font: inherit; color: inherit; border: 0; padding: 0; margin: 0; display: flex; align-items: center; justify-content: center; }
  .t { display: inline-block; white-space: pre; flex: none; }
  .st { fill: #c8c6c4; stroke: none; }

  /* Word processor */
  .word { display: flex; flex-direction: column; border: 1px solid #5b5b5a; background: #262626; overflow: hidden; }
  .wtitle { display: flex; align-items: center; height: 34px; background: #252423; padding-left: 21px; color: #b3b0ad; flex: none; }
  .auto, .docname { font-size: 11.800px; }
  .toggle { width: 38px; height: 16px; border: 1px solid #fff; border-radius: 8px; margin: 0 0 0 7px; padding: 3px 3px; flex: none; }
  .toggle i { display: block; width: 8px; height: 8px; border-radius: 50%; background: #fff; }
  .wi { fill: none; stroke: #b9b7b5; stroke-width: 1.100; }
  .wl { fill: none; stroke: #f3f2f1; }
  .signin { width: 66px; height: 19px; background: #b0adab; color: #252423; font-size: 12px; }
  .ib { font: bold 9px 'Open Sans'; }
  .wtabs { display: flex; height: 31px; gap: 28.200px; padding-left: 14px; background: #323130; font-size: 13px; line-height: 31px; flex: none; }
  .wtab.on { font-weight: 600; border-bottom: 3px solid #fff; height: 28px; }
  .share { width: 95px; height: 24px; margin: 3px 0 0 53px; background: #484644; border: 1px solid #605e5c; border-radius: 2px; font-weight: 600; line-height: 22px; gap: 4px; }
  .share svg { fill: none; stroke: #fff; stroke-width: 1.100; }
  .ribbon { display: flex; height: 96px; padding: 4px 0 0 1px; background: #323130; position: relative; flex: none; box-shadow: 0 1px 4px #0008; }
  .group { display: flex; flex-direction: column; height: 88px; border-right: 1px solid #484644; flex: none; }
  .group footer { margin-top: auto; height: 12px; line-height: 12px; margin-bottom: -1px; display: flex; align-items: center; }
  .launch { fill: none; stroke: #d6d4d2; margin-left: auto; margin-right: 3px; }
  .clip { width: 90px; } .clip footer { padding-left: 3px; }
  .gbody { display: flex; } .gbody.col { flex-direction: column; }
  .paste { width: 54px; display: flex; flex-direction: column; align-items: center; padding-top: 1px; font-size: 12px; line-height: 15px; }
  .paste svg:first-child { margin-left: 18px; }
  .paste svg:last-child { margin-top: 3px; margin-left: 12px; }
  .paste .t { margin-left: 13px; }
  .gbody > svg.wi { margin-top: 1px; }
  .font { width: 296px; padding: 8px 0 0 7px; }
  .frow { display: flex; height: 24px; align-items: center; }
  .combo { height: 23px; border: 1px solid #7a7876; background: #3b3a39; display: flex; align-items: center; justify-content: space-between; padding: 0 3px 0 2px; font-size: 12px; }
  .name { width: 111px; margin-right: 2px; } .size { width: 43px; padding-left: 3px; }
  .font .gbody > svg { margin-top: 7px; }
  .font footer { padding-left: 113px; }
  .a1 { font: 16px 'Open Sans'; } .a2 { font: 13.500px 'Open Sans'; } .a3 { font: 15px 'Open Sans'; }
  .b1 { font: bold 14px 'Open Sans'; fill: #e0e0e0; } .b2 { font: italic 14px 'Open Sans'; } .b3 { font: 13px 'Open Sans'; } .b4 { font: 12px 'Open Sans'; }
  .b5 { font: bold 12px 'Open Sans'; } .b6 { font: 7px 'Open Sans'; fill: #2f95dc; } .b7 { font: bold 18px 'Open Sans'; fill: #323130; stroke: #3c9ee5; stroke-width: 1.500; }
  .n { font: bold 6px 'Open Sans'; fill: #2f95dc; } .az { font: bold 8.500px 'Open Sans'; fill: #2f95dc; } .zz { font: 8.500px 'Open Sans'; } .pil { font: 17px 'Open Sans'; }
  .para { width: 184px; } .para footer { padding-left: 63px; }
  .styles { width: 254px; padding: 2px 0 0 9px; }
  .styles footer { padding-left: 93px; }
  .gallery { display: flex; width: 234px; height: 60px; background: #484644; border: 1px solid #555351; padding: 1px 0 0 1px; }
  .card { width: 72px; height: 56px; padding: 4px; flex: none; }
  .card.sel { background: #6f6d6b; outline: 1px solid #a19f9d; outline-offset: -1px; }
  .paper { width: 64px; height: 48px; background: #fff; display: flex; flex-direction: column; align-items: center; }
  .sample { width: 59px; overflow: hidden; color: #000; margin: 7px 0 0 1px; font-size: 12.300px; line-height: 18px; height: 24px; flex: none; }
  .sample.big { color: #2f5496; font-size: 16.500px; font-weight: 300; }
  .sname { color: #505050; font-size: 11.500px; line-height: 17px; height: 17px; }
  .spin { width: 14px; display: flex; flex-direction: column; gap: 2px; margin: -1px 0 0 1px; }
  .spin span { height: 18.500px; background: #323130; display: flex; align-items: center; justify-content: center; }
  .edit { width: 56px; align-items: center; font-size: 12px; }
  .find { width: 32px; height: 31px; border: 1px solid #7a7876; display: grid; place-items: center; margin-bottom: 4px; background: #3b3a39; }
  .edit > svg { margin-top: 3px; }
  .collapse { position: absolute; right: 8px; top: 85px; }
  .hruler { flex: none; }
  .rn { font: bold 8.700px 'Open Sans'; fill: #f0f0f0; text-anchor: middle; }
  .doc { display: flex; flex: 1; min-height: 0; overflow: hidden; }
  .pages { width: 793px; margin-left: 66px; display: flex; flex-direction: column; gap: 14px; }
  .sheet { border: 1px solid #8f8f8f; }
  .first { height: 83px; border-top: 0; flex: none; } .second { flex: 1; border-bottom: 0; padding: 93px 0 0 112px; }
  .exercise { font: bold 18.500px/26px 'Open Sans'; color: #f0f0f0; }
  .wstatus { display: flex; align-items: center; height: 22px; flex: none; background: #323130; border-top: 1px solid #454443; padding: 0 0 2px 8px; }
  .zoom { display: flex; align-items: center; margin-left: auto; margin-right: 19px; gap: 8px; }

  /* Search flyout */
  .search { position: absolute; left: 47px; top: 399px; width: 786px; height: 641px; background: #1b1b1b; border: 1px solid #424242; border-bottom: 0; display: flex; flex-direction: column; box-shadow: 0 0 12px #0006; }
  .search header { height: 51px; background: #242424; display: flex; align-items: center; padding-left: 13px; flex: none; font-size: 12.700px; color: #d2d2d2; }
  .filter { height: 51px; line-height: 50px; padding: 0 12px; margin-right: 2px; }
  .filter:nth-child(5) { padding-right: 0; margin-right: 7px; }
  .filter.on { color: #fff; font-weight: 600; border-bottom: 4px solid #00cc6a; }
  .shead { margin-left: auto; margin-right: 25px; }
  .cols { display: flex; flex: 1; min-height: 0; }
  .results { width: 344px; background: linear-gradient(#232323 80%, #24282a); flex: none; }
  h3 { margin: 0; padding-left: 12px; font-size: 12.300px; font-weight: 600; }
  .h33 { height: 33px; line-height: 33px; } .h32 { height: 32px; line-height: 32px; }
  .best { height: 64px; background: #1a5539; display: flex; }
  .bicon { margin: 14px 0 0 17px; width: 39px; }
  .btext { display: flex; flex-direction: column; align-items: flex-start; font-size: 14.300px; line-height: 24px; padding-top: 9px; }
  b { font-weight: 600; }
  .sub { font-size: 12.600px; color: #bcbcbc; }
  .best .sub { color: #c3d3cb; }
  .bopen { margin: 13px 14px 0 auto; color: #c6d6ce; }
  .row { height: 36px; display: flex; align-items: center; padding-left: 11px; font-size: 14.300px; line-height: 36px; }
  .row.tall { height: 37px; padding-bottom: 1px; }
  .row > span { margin-left: 11px; }
  .ri { fill: none; stroke: #ddd; stroke-width: 1.300; }
  .go { margin: 0 20px 0 auto; fill: none; stroke: #d5d5d5; stroke-width: 2.200; }
  .preview { width: 416px; margin: 13px 0 0 12px; background: #131313; }
  .hero { height: 178px; border-bottom: 2px solid #999; padding: 23px 0 0; display: flex; flex-direction: column; align-items: center; }
  .hero > svg { margin-right: 2px; }
  .ht { font-size: 18px; line-height: 26px; margin-top: 21px; } .hs { font-size: 12.500px; color: #bcbcbc; line-height: 20px; margin-top: 4px; }
  .acts { padding: 12px 0 0 23px; }
  .act { display: flex; align-items: center; height: 32px; font-size: 12.600px; gap: 11px; }
  .act svg { fill: none; stroke: #eee; stroke-width: 1.200; margin-top: -4px; }

  /* Browser */
  .chrome { display: flex; flex-direction: column; border-left: 1px solid #3f586c; border-bottom: 1px solid #3f586c; border-right: 1px solid #4a4a4a; background: #2b2b2b; font-size: 11.500px; overflow: hidden; }
  .strip { height: 41px; display: flex; flex: none; border-top: 1px solid #4d4d4d; padding: 6px 17px 0 6px; }
  .tabsearch { width: 28px; height: 28px; border-radius: 9px; background: #3c3c3c; }
  .tab { display: flex; align-items: center; height: 34px; padding-bottom: 5px; color: #c7c7c7; }
  .x { fill: none; stroke: #d5d5d5; stroke-width: 1.600; margin-left: auto; }
  .idle { width: 212px; margin-left: 14px; gap: 8px; }
  .live { width: 232px; margin-left: 18px; background: #3c3c3c; border-radius: 10px 10px 0 0; padding: 0 12px 6px 9px; gap: 9px; color: #e3e3e3; }
  .plus { margin: 9px 0 0 15px; } .caps { margin: 7px 0 0 auto; }
  .bar { height: 47px; display: flex; align-items: center; flex: none; background: #3c3c3c; border-bottom: 1px solid #515253; }
  .omni { width: 575px; height: 34px; border-radius: 17px; background: #282828; display: flex; align-items: center; padding: 0 16px 0 5px; font-size: 13.200px; }
  .site { width: 24px; height: 24px; border-radius: 50%; background: #3c3c3c; display: grid; place-items: center; margin-right: 8px; }
  .host { color: #e8e8e8; } .path { color: #c2c2c2; } .star { margin-left: auto; }
  .incog { width: 99px; height: 34px; border-radius: 17px; background: #282828; display: flex; align-items: center; padding-left: 13px; gap: 8px; color: #e3e3e3; }
  .more { margin-left: 20px; }
  .pdfbar { height: 56px; flex: none; background: #323639; display: flex; align-items: center; z-index: 1; box-shadow: 0 1px 4px #0006; font-size: 12.500px; }
  .burger { margin: 0 24px; } .fname { font-weight: 600; font-size: 13px; }
  .pager { display: flex; align-items: center; margin-left: 223px; gap: 4px; width: 72px; }
  .pager b, .pct { background: #191b1c; height: 20px; width: 24px; display: grid; place-items: center; font-weight: 400; }
  .pct { width: 44px; } .right { margin-left: auto; margin-right: 27px; }
  .viewer { flex: 1; display: flex; background: #525659; min-height: 0; overflow: hidden; }
  .page { width: 793px; margin-left: 74px; background: #fff; color: #1d1d1b; padding-left: 75.500px; font: 13.500px/16px Lato, 'Open Sans', sans-serif; flex: none; box-shadow: 0 0 5px #0006; overflow: hidden; }
  .page p { margin: 0; height: 16px; }
  .page .m15 { margin-top: 15px; } .page .m16 { margin-top: 16px; }
  .snug { letter-spacing: -.2px; }
  .fig20 { margin-left: 126px; } .fig21 { margin: 13px 0 0 131.500px; }
  .cap { height: 16px; font-size: 11px; } .c20 { margin: 2px 0 0 126px; } .c21 { margin: 4px 0 0 131.500px; }
  h1 { margin: 35px 0 13px; height: 32px; font: bold 25.500px/32px Lato, sans-serif; color: #16304f; display: flex; }
  .slash { font-weight: 400; font-size: 30px; width: 21.500px; }
  ul { list-style: none; margin: 0; padding: 0 0 0 37.500px; }
  li { margin-top: 16px; } li::before { content: '•'; float: left; width: 12px; margin-left: -12px; font: 11px/16px 'Open Sans'; }
  .page b { font-weight: 700; }
  .u { font: 8.800px 'Open Sans'; fill: #333; } .u.blue { fill: #2a4fa3; }
  .v { font: 5.500px 'Open Sans'; fill: #333; text-rendering: geometricPrecision; } .v.hd { fill: #fff; font-weight: bold; } .v.lt { fill: #ddd; } .v.g { fill: #777; } .v.end { text-anchor: end; } .v.dk { font-weight: bold; } .v.nv { fill: #1d3a63; }
  .scroll { width: 17px; margin-left: auto; background: #f1f1f1; display: flex; flex-direction: column; }
  .thumb { width: 15px; height: 38px; margin: 582px 1px auto; background: #c1c1c1; }

  /* Taskbar */
  .taskbar { grid-column: 1 / 3; display: flex; background: linear-gradient(90deg, #21393f, #23393f 40%, #1f3344 55%, #1b2842 80%, #1a2643); font-size: 13.200px; }
  .sbox { width: 288px; height: 40px; border: 2px solid #00cc6a; background: #fff; color: #111; display: flex; align-items: center; padding-left: 9px; font-size: 14.300px; }
  .sbox svg { margin-right: 11px; } .caret { width: 1px; height: 20px; background: #000; } .hint { color: #9b9b9b; margin-left: 3px; }
  .apps { display: flex; gap: 9px; padding-left: 5px; }
  .app { width: 40px; height: 40px; display: grid; place-items: center; border-bottom: 2px solid transparent; padding-top: 2px; }
  .run { border-color: #a4f0c8; }
  .split { border-image: linear-gradient(90deg, #a4f0c8 78%, #7aa896 78%) 1; border-width: 0 0 2px; border-style: solid; }
  .tray { display: flex; align-items: center; margin-left: auto; }
  .tray > .t { margin-left: 6px; } .tray > .wx { margin-left: 10px; }
  .icons { margin-left: 24px; } .clock { width: 72px; display: flex; flex-direction: column; align-items: center; font-size: 11.300px; line-height: 18px; }
  .note { margin: 0 19px 0 11px; } .peek { width: 1px; height: 40px; background: #5d6a80; margin-right: 4px; }
  .st.w { font: bold 11px 'Open Sans'; fill: #fff; }
</style>
